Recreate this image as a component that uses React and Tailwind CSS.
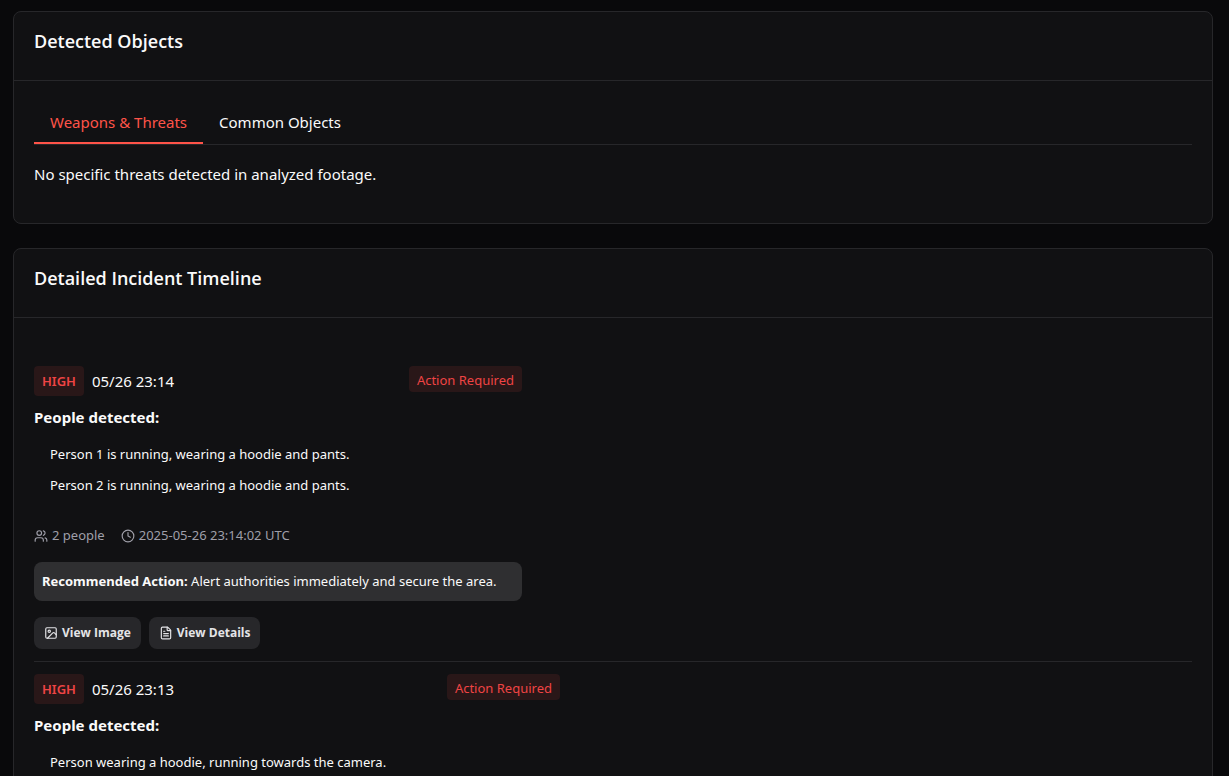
import { Clock, FileText, Image, Users } from "lucide-react";
import { useState } from "react";

const tabs = [
  { id: "threats", label: "Weapons & Threats" },
  { id: "common", label: "Common Objects" }
];

const incidents = [
  {
    id: 1,
    time: "05/26 23:14",
    width: "max-w-[488px]",
    people: ["Person 1 is running, wearing a hoodie and pants.", "Person 2 is running, wearing a hoodie and pants."],
    count: "2 people",
    timestamp: "2025-05-26 23:14:02 UTC",
    action: "Alert authorities immediately and secure the area."
  },
  {
    id: 2,
    time: "05/26 23:13",
    width: "max-w-[526px]",
    people: ["Person wearing a hoodie, running towards the camera."]
  }
];

export default function App() {
  const [active, setActive] = useState("threats");

  return (
    <main className="flex min-h-screen flex-col gap-6 bg-[#09090b] pb-6 pl-[13px] pr-4 pt-[11px] font-['Noto_Sans',sans-serif] text-[15px] leading-6 text-zinc-50">
      <Card title="Detected Objects">
        <div role="tablist" className="flex border-b border-[#27272a]">
          {tabs.map((tab) => (
            <button
              key={tab.id}
              type="button"
              role="tab"
              aria-selected={active === tab.id}
              onClick={() => setActive(tab.id)}
              className={`border-b-2 px-4 pb-2 pt-[9px] ${
                active === tab.id ? "border-[#ff5449] text-[#ff5449]" : "border-transparent"
              }`}
            >
              {tab.label}
            </button>
          ))}
        </div>
        <p className="py-[17px]">No specific threats detected in analyzed footage.</p>
      </Card>

      <Card title="Detailed Incident Timeline">
        <ul className="pt-4">
          {incidents.map((incident) => (
            <Incident key={incident.id} incident={incident} />
          ))}
        </ul>
      </Card>
    </main>
  );
}

function Card({ title, children }) {
  return (
    <section className="rounded-lg border border-[#27272a] bg-[#111113]">
      <header className="border-b border-[#27272a] px-5 pb-[29px] pt-[19px]">
        <h3 className="font-['Open_Sans',sans-serif] text-[18px] font-semibold leading-5">{title}</h3>
      </header>
      <div className="p-5">{children}</div>
    </section>
  );
}

function Incident({ incident }) {
  return (
    <li className="border-b border-[#27272a] py-3 last:border-b-0">
      <div className={incident.width}>
        <div className="flex items-start justify-between">
          <div className="flex items-center gap-2">
            <span className="rounded bg-[#291718] px-2 py-1 text-[13px] font-semibold leading-[22px] text-[#ef4444]">HIGH</span>
            <span>{incident.time}</span>
          </div>
          <span className="rounded bg-[#291718] px-2 pb-[3px] pt-[5px] text-[13px] leading-[18px] text-[#ef4444]">
            Action Required
          </span>
        </div>

        <h4 className="mt-[9px] font-bold">People detected:</h4>
        <ul className="mt-[10px] pl-4 text-[13px] leading-[21px]">
          {incident.people.map((person) => (
            <li key={person} className="py-[5px]">
              {person}
            </li>
          ))}
        </ul>

        {incident.timestamp && (
          <div className="mt-6 flex gap-4 text-[13px] leading-[21px] text-zinc-400">
            <span className="flex items-center gap-1">
              <Users size={14} />
              {incident.count}
            </span>
            <span className="flex items-center gap-1">
              <Clock size={14} />
              {incident.timestamp}
            </span>
          </div>
        )}

        {incident.action && (
          <>
            <p className="mt-4 rounded-lg bg-[#2f2f31] px-2 py-[9px] text-[13px] leading-[21px]">
              <strong className="font-bold">Recommended Action:</strong> {incident.action}
            </p>
            <div className="mt-4 flex gap-2">
              <ActionButton icon={Image} label="View Image" />
              <ActionButton icon={FileText} label="View Details" />
            </div>
          </>
        )}
      </div>
    </li>
  );
}

function ActionButton({ icon: Icon, label }) {
  return (
    <button
      type="button"
      className="flex h-8 items-center gap-1 rounded-lg bg-[#27272a] px-[10px] font-['Open_Sans',sans-serif] text-[12px] font-bold text-zinc-200"
    >
      <Icon size={14} />
      {label}
    </button>
  );
}
